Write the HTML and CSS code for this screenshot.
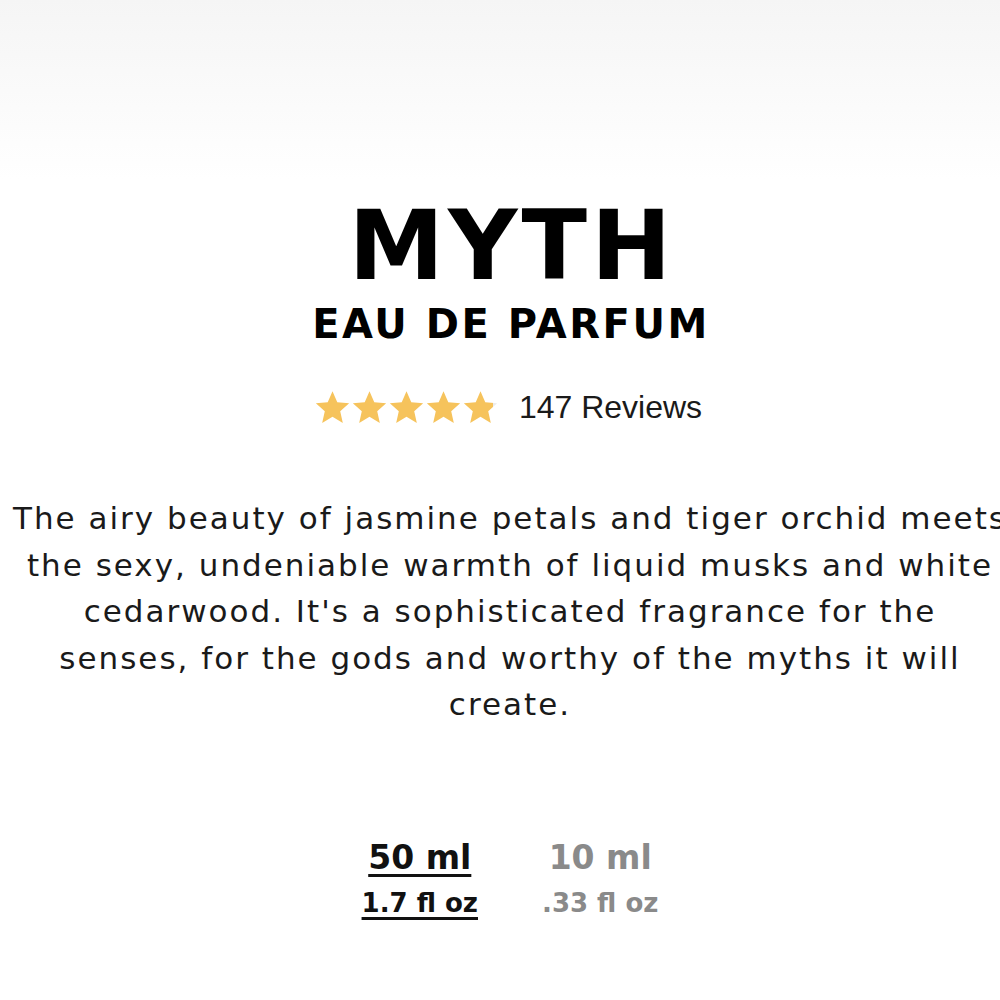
FILE: index.html
```html
<!DOCTYPE html>
<html lang="en">
<head>
<meta charset="utf-8">
<title>MYTH Eau de Parfum</title>
<link rel="stylesheet" href="styles.css">
</head>
<body>
<div class="hero"></div>
<main class="product">
  <h1 class="title">MYTH</h1>
  <h2 class="subtitle">EAU DE PARFUM</h2>
  <div class="rating">
    <div class="stars">
      <svg class="star" viewBox="0 0 24 24"><path d="M12 1.5l3.1 7.1 7.7.7-5.8 5.1 1.7 7.6L12 18l-6.7 4 1.7-7.6L1.2 9.3l7.7-.7z"/></svg>
      <svg class="star" viewBox="0 0 24 24"><path d="M12 1.5l3.1 7.1 7.7.7-5.8 5.1 1.7 7.6L12 18l-6.7 4 1.7-7.6L1.2 9.3l7.7-.7z"/></svg>
      <svg class="star" viewBox="0 0 24 24"><path d="M12 1.5l3.1 7.1 7.7.7-5.8 5.1 1.7 7.6L12 18l-6.7 4 1.7-7.6L1.2 9.3l7.7-.7z"/></svg>
      <svg class="star" viewBox="0 0 24 24"><path d="M12 1.5l3.1 7.1 7.7.7-5.8 5.1 1.7 7.6L12 18l-6.7 4 1.7-7.6L1.2 9.3l7.7-.7z"/></svg>
      <svg class="star" viewBox="0 0 24 24"><defs><linearGradient id="part" x1="0" x2="1" y1="0" y2="0"><stop offset="0.88" stop-color="#f6c35c"/><stop offset="0.88" stop-color="#ececec"/></linearGradient></defs><path fill="url(#part)" d="M12 1.5l3.1 7.1 7.7.7-5.8 5.1 1.7 7.6L12 18l-6.7 4 1.7-7.6L1.2 9.3l7.7-.7z"/></svg>
    </div>
    <span class="reviews">147 Reviews</span>
  </div>
  <p class="description">The airy beauty of jasmine petals and tiger orchid meets<br>the sexy, undeniable warmth of liquid musks and white<br>cedarwood. It's a sophisticated fragrance for the<br>senses, for the gods and worthy of the myths it will<br>create.</p>
  <div class="sizes">
    <div class="size active">
      <span class="ml">50 ml</span>
      <span class="oz">1.7 fl oz</span>
    </div>
    <div class="size">
      <span class="ml">10 ml</span>
      <span class="oz">.33 fl oz</span>
    </div>
  </div>
</main>
</body>
</html>
```

FILE: styles.css
```css
html, body {
  margin: 0;
  padding: 0;
  background: #ffffff;
  overflow-x: hidden;
}
body {
  width: 1000px;
  color: #111111;
}
.hero {
  height: 180px;
  background: linear-gradient(to bottom, #f5f5f5 0%, #fbfbfb 60%, #ffffff 100%);
}
.product {
  width: 1000px;
  margin-left: 10px;
  display: flex;
  flex-direction: column;
  align-items: center;
  text-align: center;
}
.title {
  margin: 18px 0 0;
  padding-left: 4px;
  font-family: "DejaVu Sans", sans-serif;
  font-weight: 700;
  font-size: 96px;
  line-height: 96px;
  letter-spacing: 4px;
  color: #000;
}
.subtitle {
  margin: 8px 0 0;
  padding-left: 2px;
  font-family: "DejaVu Sans", sans-serif;
  font-weight: 700;
  font-size: 40px;
  line-height: 44px;
  letter-spacing: 2.5px;
  color: #000;
}
.rating {
  margin-top: 41px;
  display: flex;
  align-items: center;
  gap: 20px;
  margin-left: -4px;
}
.stars {
  display: flex;
}
.star {
  width: 37px;
  height: 37px;
  fill: #f6c35c;
}
.reviews {
  font-family: "Liberation Sans", Arial, sans-serif;
  font-size: 32px;
  line-height: 40px;
  color: #1a1a1a;
}
.description {
  margin: 68px 0 0;
  font-family: "DejaVu Sans", sans-serif;
  font-size: 31px;
  line-height: 46.5px;
  letter-spacing: 2px;
  color: #1a1a1a;
  white-space: nowrap;
}
.sizes {
  margin-top: 110px;
  display: flex;
  gap: 64px;
}
.size {
  display: flex;
  flex-direction: column;
  align-items: center;
  font-family: "DejaVu Sans", sans-serif;
  font-weight: 700;
  color: #8a8a8a;
}
.ml {
  font-size: 33px;
  line-height: 40px;
}
.oz {
  margin-top: 8px;
  font-size: 26px;
  line-height: 34px;
}
.size.active {
  color: #111111;
}
.size.active .ml,
.size.active .oz {
  text-decoration: underline;
  text-decoration-thickness: 3px;
  text-underline-offset: 5px;
}
```
